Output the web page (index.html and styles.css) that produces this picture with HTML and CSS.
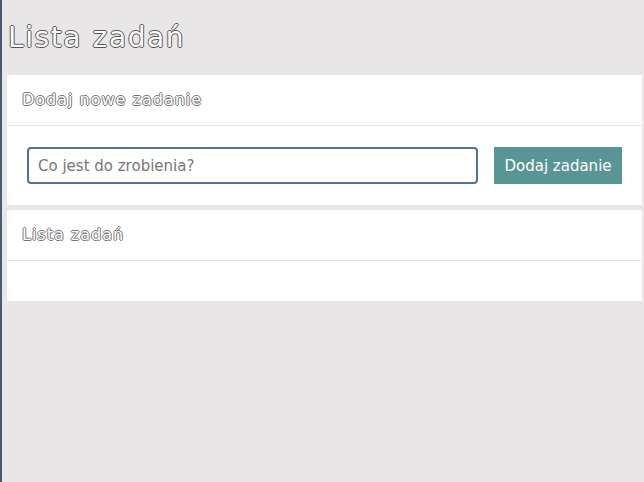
FILE: index.html
```html
<!DOCTYPE html>
<html lang="pl">
<head>
<meta charset="utf-8">
<title>Lista zadań</title>
<link rel="stylesheet" href="styles.css">
</head>
<body>
<div class="page">
  <h1 class="title">Lista zadań</h1>
  <section class="card">
    <header class="card-header"><h2 class="card-title">Dodaj nowe zadanie</h2></header>
    <div class="card-body form-row">
      <input class="task-input" type="text" placeholder="Co jest do zrobienia?">
      <button class="add-btn" type="button">Dodaj zadanie</button>
    </div>
  </section>
  <section class="card">
    <header class="card-header"><h2 class="card-title">Lista zadań</h2></header>
    <div class="card-body"></div>
  </section>
</div>
</body>
</html>
```

FILE: styles.css
```css
html, body {
  margin: 0;
  height: 100%;
}
body {
  background: #e8e6e6;
  font-family: "DejaVu Sans", "Open Sans", sans-serif;
  border-left: 2px solid #4b5a74;
  box-sizing: border-box;
}
.page {
  padding: 0 2px 0 5px;
}
.title {
  margin: 0;
  padding: 20px 0 19px 1px;
  font-size: 28px;
  font-weight: normal;
  line-height: 36px;
  letter-spacing: 1.6px;
  color: #fff;
  text-shadow: 1px 0 #555, -1px 0 #555, 0 1px #555, 0 -1px #555;
}
.card {
  background: #fff;
  margin-bottom: 5px;
}
.card-header {
  border-bottom: 1px solid #e6e6e6;
  padding: 12px 15px 13px;
}
.card-title {
  margin: 0;
  font-size: 16px;
  font-weight: normal;
  line-height: 25px;
  letter-spacing: 1px;
  color: #fff;
  text-shadow: 1px 0 #777, -1px 0 #777, 0 1px #777, 0 -1px #777;
}
.card-body {
  padding: 20px;
}
.form-row {
  display: flex;
  gap: 16px;
  padding: 21px 20px 21px 20px;
}
.task-input {
  flex: 1;
  height: 37px;
  box-sizing: border-box;
  border: 2px solid #4e739c;
  border-radius: 4px;
  padding: 0 9px;
  font-family: inherit;
  font-size: 15px;
  color: #333;
  outline: none;
}
.task-input::placeholder {
  color: #777;
}
.add-btn {
  width: 128px;
  height: 37px;
  border: none;
  background: #5a9595;
  color: #fff;
  font-family: inherit;
  font-size: 15px;
  padding: 0;
}
```
